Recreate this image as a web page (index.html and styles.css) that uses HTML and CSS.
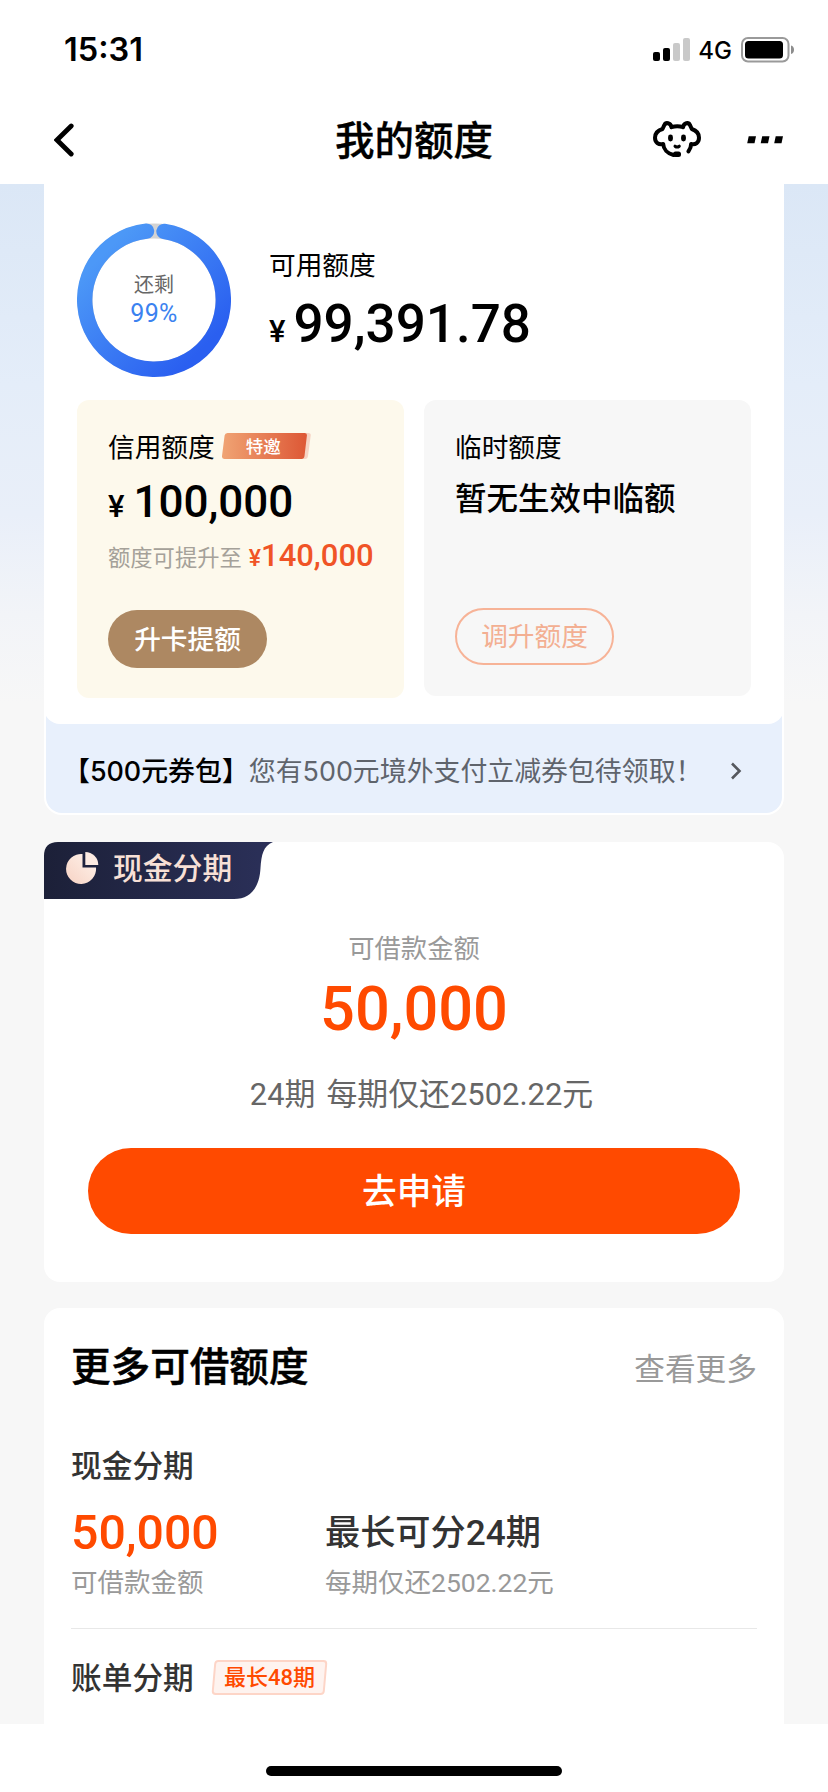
FILE: index.html
```html
<!DOCTYPE html>
<html lang="zh-CN">
<head>
<meta charset="utf-8">
<title>我的额度</title>
<link rel="stylesheet" href="styles.css">
</head>
<body>
<div class="screen">
  <header class="header">
    <div class="status">
      <span class="time">15:31</span>
      <div class="status-right">
        <svg class="signal" width="38" height="24" viewBox="0 0 38 24">
          <rect x="0" y="14" width="7" height="9" rx="2"/>
          <rect x="10" y="10" width="7" height="13" rx="2"/>
          <rect x="20" y="5" width="7" height="18" rx="2" fill="#c9c9c9"/>
          <rect x="30" y="0" width="7" height="23" rx="2" fill="#c9c9c9"/>
        </svg>
        <span class="net">4G</span>
        <svg class="battery" width="54" height="26" viewBox="0 0 54 26">
          <rect x="1" y="1" width="46.500" height="23.500" rx="6" fill="none" stroke="#9a9a9a" stroke-width="2"/>
          <rect x="4" y="4" width="38" height="17.500" rx="3.500"/>
          <path d="M50 8.500c4 1 4 7.500 0 8.500z" fill="#8d8d8d"/>
        </svg>
      </div>
    </div>
    <nav class="nav">
      <svg class="back" width="20" height="34" viewBox="0 0 20 34"><path d="M17.200 3 3 17l14.200 14" fill="none" stroke="#000" stroke-width="4.800" stroke-linecap="round" stroke-linejoin="miter"/></svg>
      <h1 class="title">我的额度</h1>
      <div class="nav-right">
        <svg width="48" height="37" viewBox="0 0 48 37" fill="none" stroke="#000" stroke-width="4" stroke-linecap="round" stroke-linejoin="round">
          <path d="M18.500 6.200C22 5 26.500 5 30 6.200M18.500 6.200C17.500 1.800 12.800.8 11.300 4.200L9.500 8C4.500 9.500 2 13 2 16.800c0 4.700 3.500 7.300 8.200 6.200.3 5.300 4.300 9.600 10.300 11M30 6.200C31 1.800 35.500.8 37 4.200L38.800 8c4.700 1.500 7.200 5 7.200 8.800 0 4.700-3.500 7.300-7.900 6.200 0 3-.8 5-2.600 7.300"/>
          <path d="M17.500 16v2M30.500 16v2" stroke-width="4.800"/>
          <path d="M22 25.200c1.300 1 3 1 4.300 0" stroke-width="3"/>
          <rect x="20" y="30.500" width="8" height="5.500" rx="2.500" fill="#000" stroke="none"/>
        </svg>
        <svg width="37" height="8" viewBox="0 0 37 8"><path d="M1.700.2H9L7.500 7.200H.2zM15.200.2h7.300L21 7.200h-7.300zM28.700.2H36l-1.500 7h-7.300z"/></svg>
      </div>
    </nav>
  </header>

  <main class="content">
    <section class="quota">
      <div class="overview">
        <div class="ring">
          <svg class="ring-art" width="154" height="154" viewBox="0 0 154 154">
            <defs><linearGradient id="ring" x1="0.150" y1="0.150" x2="0.850" y2="0.850"><stop offset="0" stop-color="#4c98f7"/><stop offset="1" stop-color="#2a5ff0"/></linearGradient></defs>
            <circle cx="77" cy="77" r="69" fill="none" stroke="#d3d3d3" stroke-width="15"/>
            <path d="M87 8.425A69.300 69.300 0 1 1 69.500 8.107" fill="none" stroke="url(#ring)" stroke-width="15.400" stroke-linecap="round"/>
          </svg>
          <span class="ring-label">还剩</span>
          <span class="ring-value">99%</span>
        </div>
        <div class="available">
          <div class="label">可用额度</div>
          <div class="amount"><span class="yen">¥</span>99,391.78</div>
        </div>
      </div>
      <div class="cards">
        <div class="card credit">
          <div class="label">信用额度
            <span class="invite">
              <svg class="invite-art" width="90" height="26" viewBox="0 0 90 26">
                <defs><linearGradient id="inv"><stop offset="0" stop-color="#f0a474"/><stop offset="1" stop-color="#dd5735"/></linearGradient></defs>
                <path d="M80 0h6.500q2.500 0 2.200 2.500L86 23q-.4 3-3 3h-5z" fill="#f6d3c3"/>
                <path d="M5.500 0h77q2.700 0 2.400 2.500L82.500 23q-.4 3-3 3h-77Q-.3 26 0 23L2.600 2.500Q3 0 5.500 0z" fill="url(#inv)"/>
              </svg>
              <span class="invite-text">特邀</span>
            </span>
          </div>
          <div class="sum"><span class="yen">¥</span>100,000</div>
          <div class="raise"><span class="raise-text">额度可提升至</span><span class="raise-yen">¥</span>140,000</div>
          <button class="pill solid">升卡提额</button>
        </div>
        <div class="card temp">
          <div class="label">临时额度</div>
          <div class="none">暂无生效中临额</div>
          <button class="pill outline">调升额度</button>
        </div>
      </div>
    </section>

    <section class="coupon">
      <b class="coupon-name">【500元券包】</b><span class="coupon-text">您有500元境外支付立减券包待领取！</span>
      <svg class="more" width="12" height="18" viewBox="0 0 12 18"><path d="M2 1.500 9.500 9 2 16.500" fill="none" stroke="#55585e" stroke-width="2.600"/></svg>
    </section>

    <section class="loan">
      <div class="tab">
        <svg class="tab-art" width="230" height="57" viewBox="0 0 230 57">
          <defs><linearGradient id="tab"><stop offset="0" stop-color="#1c2038"/><stop offset="1" stop-color="#2b3059"/></linearGradient></defs>
          <path d="M14 0H229C219 4 217.500 13 216.500 26 215.500 45 207 57 190 57H0V14Q0 0 14 0z" fill="url(#tab)"/>
        </svg>
        <svg class="pie" width="33" height="33" viewBox="0 0 33 33">
          <defs><linearGradient id="pie" x1="0" y1="1" x2="1" y2="0"><stop offset="0" stop-color="#f7d3c4"/><stop offset="1" stop-color="#fff3ec"/></linearGradient></defs>
          <path d="M16.500 2A15 15 0 1 0 30 15.500H16.500z" fill="url(#pie)"/>
          <path d="M19.300 0A13 13 0 0 1 32.300 13H19.300z" fill="#fdebe2"/>
        </svg>
        <span class="tab-text">现金分期</span>
      </div>
      <div class="loan-label">可借款金额</div>
      <div class="loan-amount">50,000</div>
      <div class="loan-plan">24期<span class="gap"></span>每期仅还2502.22元</div>
      <button class="apply">去申请</button>
    </section>

    <section class="list">
      <div class="list-head">
        <h2 class="list-title">更多可借额度</h2>
        <span class="list-more">查看更多</span>
      </div>
      <div class="item">
        <div class="item-name">现金分期</div>
        <div class="item-grid">
          <span class="item-amount">50,000</span>
          <span class="item-term">最长可分24期</span>
          <span class="item-note">可借款金额</span>
          <span class="item-note">每期仅还2502.22元</span>
        </div>
      </div>
      <div class="item second">
        <div class="item-name">账单分期</div>
        <div class="tag"><span class="tag-text">最长48期</span></div>
      </div>
    </section>
  </main>
  <footer class="home"><div class="home-bar"></div></footer>
</div>
</body>
</html>
```
FILE: styles.css
```css
* { box-sizing: border-box; }
body {
  margin: 0;
  font-family: "Noto Sans CJK SC", sans-serif;
  color: #000;
  background: #fff;
}
h1, h2 { margin: 0; font-weight: 500; }
button { border: 0; padding: 0; font-family: inherit; display: block; }
svg { display: block; flex: none; }
.screen { width: 828px; height: 1792px; overflow: hidden; display: flex; flex-direction: column; }

.header { height: 184px; flex: none; background: #fff; }
.status { height: 99px; padding: 0 33px 0 64px; display: flex; align-items: center; justify-content: space-between; }
.time { font: 600 32.500px/40px Inter, sans-serif; padding-top: 1px; }
.status-right { display: flex; align-items: center; }
.net { font: 500 24px/30px Inter, sans-serif; margin: 2px 9px 0 7px; }
.nav { height: 81px; display: grid; grid-template-columns: 1fr auto 1fr; align-items: center; padding: 0 44px 0 54px; }
.title { font-size: 39.500px; line-height: 56px; margin-top: -4px; margin-left: -10px; -webkit-text-stroke: 0.300px #000; }
.nav-right { display: flex; justify-content: flex-end; align-items: center; gap: 46px; }

.content {
  height: 1540px;
  flex: none;
  padding: 0 44px;
  overflow: hidden;
  background: linear-gradient(180deg, #dbe7f6 0, #e4edf9 200px, #e9eff9 330px, #f2f4f8 430px, #f7f7f7 520px);
}
.quota { position: relative; z-index: 1; height: 540px; padding: 39px 33px 0; background: #fff; border-radius: 0 0 16px 16px; }
.overview { display: flex; gap: 38px; height: 154px; }
.ring { position: relative; width: 154px; display: flex; flex-direction: column; align-items: center; padding-top: 46px; }
.ring-art { position: absolute; inset: 0; }
.ring-label { position: relative; font-size: 20px; line-height: 30px; color: #666; }
.ring-value { position: relative; font: 25px/30px Roboto, sans-serif; letter-spacing: 0.300px; color: #3b82f0; }
.available { padding-top: 23px; }
.label { font-size: 26.700px; line-height: 36px; display: flex; align-items: center; }
.amount { font: 500 53px/60px Roboto, sans-serif; margin-top: 12px; }
.yen { font-size: 31px; margin-right: 8px; }

.cards { display: flex; justify-content: space-between; align-items: flex-start; margin-top: 23px; }
.card { width: 327px; padding: 28px 0 0 31px; border-radius: 12px; }
.credit { height: 298px; background: #fdf9ec; }
.temp { height: 296px; background: #f7f7f7; }
.invite { position: relative; width: 90px; height: 26px; margin-left: 7px; display: flex; align-items: center; }
.invite-art { position: absolute; inset: 0; }
.invite-text { position: relative; padding-left: 24px; font-size: 17.500px; line-height: 26px; font-weight: 500; color: #fff; }
.sum { height: 52px; font: 500 44px/52px Roboto, sans-serif; margin-top: 12px; }
.sum .yen { margin-right: 9px; }
.raise { height: 40px; font: 500 31px/40px Roboto, sans-serif; color: #f05426; margin-top: 8px; white-space: nowrap; }
.raise-text { font: 22.300px/20px "Noto Sans CJK SC", sans-serif; color: #a5a199; margin-right: 7px; }
.raise-yen { font-size: 23px; line-height: 20px; }
.pill { width: 159px; height: 58px; border-radius: 29px; font-size: 26.700px; line-height: 50px; text-align: center; padding-bottom: 3px; }
.solid { margin-top: 34px; background: #ad8862; color: #fff; font-weight: 500; }
.none { font-size: 31.500px; line-height: 40px; font-weight: 500; margin-top: 12px; }
.outline { height: 57px; margin-top: 92px; background: transparent; border: 2px solid #f7b397; color: #f3af92; }

.coupon {
  height: 107px;
  margin-top: -16px;
  padding: 21px 40px 0 17px;
  display: flex;
  align-items: center;
  background: #e8f0fc;
  border: 2px solid #fff;
  border-top: 0;
  border-radius: 0 0 18px 18px;
  font: 26.900px/36px Inter, "Noto Sans CJK SC", sans-serif;
  white-space: nowrap;
}
.coupon-name { font-weight: 500; }
.coupon-text { color: #5f646c; }
.more { margin-left: auto; }

.loan { height: 440px; margin-top: 27px; background: #fff; border-radius: 16px; display: flex; flex-direction: column; align-items: center; }
.tab { position: relative; align-self: flex-start; width: 230px; height: 57px; padding: 0 0 4px 22px; display: flex; align-items: center; gap: 14px; }
.tab-art { position: absolute; inset: 0; }
.pie { position: relative; }
.tab-text { position: relative; font-size: 29.800px; line-height: 40px; margin-top: -6px; font-weight: 500; color: #f8e0d6; }
.loan-label { font-size: 26.300px; line-height: 36px; color: #999; margin-top: 30px; }
.loan-amount { font: 500 61.300px/72px Roboto, sans-serif; color: #ff4a00; margin-top: 8px; }
.loan-plan { font: 30.900px/40px Roboto, "Noto Sans CJK SC", sans-serif; color: #666; margin: 30px 0 0 15px; }
.gap { display: inline-block; width: 11px; }
.apply { width: 652px; height: 86px; margin-top: 33px; padding-bottom: 5px; border-radius: 43px; background: #ff4a00; color: #fff; font-size: 34.700px; line-height: 80px; font-weight: 500; }

.list { height: 440px; margin-top: 26px; padding: 28px 27px 0; background: #fff; border-radius: 16px 16px 0 0; }
.list-head { display: flex; justify-content: space-between; align-items: center; height: 56px; }
.list-title { font-size: 39.600px; line-height: 56px; -webkit-text-stroke: 0.500px #000; }
.list-more { font-size: 30.700px; line-height: 40px; margin-top: 6px; color: #999; }
.item { padding-top: 52px; border-bottom: 1px solid #e8e8e8; height: 237px; }
.item-name { font-size: 30.700px; line-height: 40px; font-weight: 500; color: #333; }
.item-grid { display: grid; grid-template-columns: 254px 1fr; margin-top: 19px; row-gap: 2px; }
.item-amount { font: 500 48.200px/60px Roboto, sans-serif; color: #ff4a00; }
.item-term { font: 500 35.200px/60px Roboto, "Noto Sans CJK SC", sans-serif; color: #333; }
.item-note { font: 26.500px/36px Roboto, "Noto Sans CJK SC", sans-serif; color: #999; }
.second { display: flex; align-items: flex-start; gap: 19px; padding-top: 27px; border: 0; height: auto; }
.tag { margin-top: 4px; width: 113px; height: 35px; border: 2px solid #fdd5c7; background: #fef3ef; border-radius: 4px; transform: skewX(-5deg); display: flex; justify-content: center; }
.tag-text { font: 500 22px/31px Roboto, "Noto Sans CJK SC", sans-serif; color: #ff4a00; transform: skewX(5deg); white-space: nowrap; }

.home { flex: 1; background: #fff; display: flex; justify-content: center; padding-top: 42px; }
.home-bar { width: 296px; height: 10px; border-radius: 5px; background: #000; }
```
